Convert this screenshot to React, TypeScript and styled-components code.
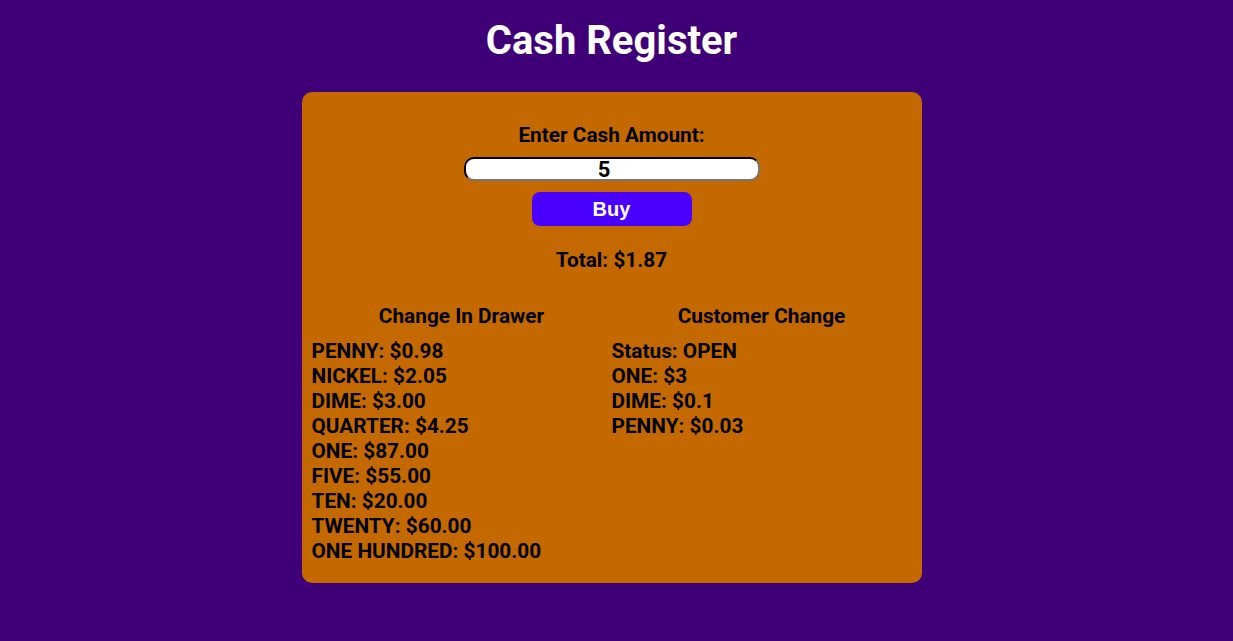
import React from "react";
import styled, { createGlobalStyle } from "styled-components";

const Global = createGlobalStyle`
  html, body { margin: 0; padding: 0; }
  body {
    background: #3f0077;
    font-family: Roboto, "Noto Sans", sans-serif;
    color: #000;
  }
`;

const Page = styled.main`
  display: flex;
  flex-direction: column;
  align-items: center;
  padding: 17px 10px 0 0;
`;

const Title = styled.h1`
  margin: 0;
  color: #fff;
  font-size: 40px;
  font-weight: 700;
  line-height: 48px;
`;

const Card = styled.section`
  margin-top: 27px;
  width: 620px;
  height: 491px;
  box-sizing: border-box;
  background: #c46900;
  border-radius: 10px;
  padding: 31px 10px 10px;
  display: flex;
  flex-direction: column;
  align-items: center;
`;

const Label = styled.label`
  font-size: 20.8px;
  font-weight: 700;
  line-height: 25px;
`;

const Input = styled.input`
  margin-top: 9px;
  width: 296px;
  height: 24px;
  box-sizing: border-box;
  border: 2px inset #767676;
  border-top-color: #222;
  border-left-color: #222;
  border-radius: 10px;
  background: #fff;
  text-align: center;
  font-family: Roboto, sans-serif;
  font-size: 22px;
  font-weight: 700;
  padding: 0 15px 0 0;
  color: #000;
`;

const BuyButton = styled.button`
  margin-top: 11px;
  width: 160px;
  height: 34px;
  border: none;
  border-radius: 8px;
  background: #4a00ff;
  color: #fff;
  font-family: "Liberation Sans", Arial, sans-serif;
  font-size: 20px;
  font-weight: 700;
`;

const Total = styled.p`
  margin: 22px 0 0;
  font-size: 20.8px;
  font-weight: 700;
  line-height: 25px;
`;

const Columns = styled.div`
  margin-top: 31px;
  width: 100%;
  display: grid;
  grid-template-columns: 1fr 1fr;
`;

const Column = styled.div`
  display: flex;
  flex-direction: column;
`;

const ColumnTitle = styled.h2`
  margin: 0 0 10px;
  text-align: center;
  font-size: 20.8px;
  font-weight: 700;
  line-height: 25px;
`;

const Line = styled.div`
  font-size: 20.8px;
  font-weight: 700;
  line-height: 25px;
`;

const drawer = [
  "PENNY: $0.98",
  "NICKEL: $2.05",
  "DIME: $3.00",
  "QUARTER: $4.25",
  "ONE: $87.00",
  "FIVE: $55.00",
  "TEN: $20.00",
  "TWENTY: $60.00",
  "ONE HUNDRED: $100.00",
];

const change = ["Status: OPEN", "ONE: $3", "DIME: $0.1", "PENNY: $0.03"];

export default function App() {
  return (
    <>
      <Global />
      <Page>
        <Title>Cash Register</Title>
        <Card>
          <Label htmlFor="cash">Enter Cash Amount:</Label>
          <Input id="cash" defaultValue="5" />
          <BuyButton>Buy</BuyButton>
          <Total>Total: $1.87</Total>
          <Columns>
            <Column>
              <ColumnTitle>Change In Drawer</ColumnTitle>
              {drawer.map((d) => (
                <Line key={d}>{d}</Line>
              ))}
            </Column>
            <Column>
              <ColumnTitle>Customer Change</ColumnTitle>
              {change.map((d) => (
                <Line key={d}>{d}</Line>
              ))}
            </Column>
          </Columns>
        </Card>
      </Page>
    </>
  );
}
